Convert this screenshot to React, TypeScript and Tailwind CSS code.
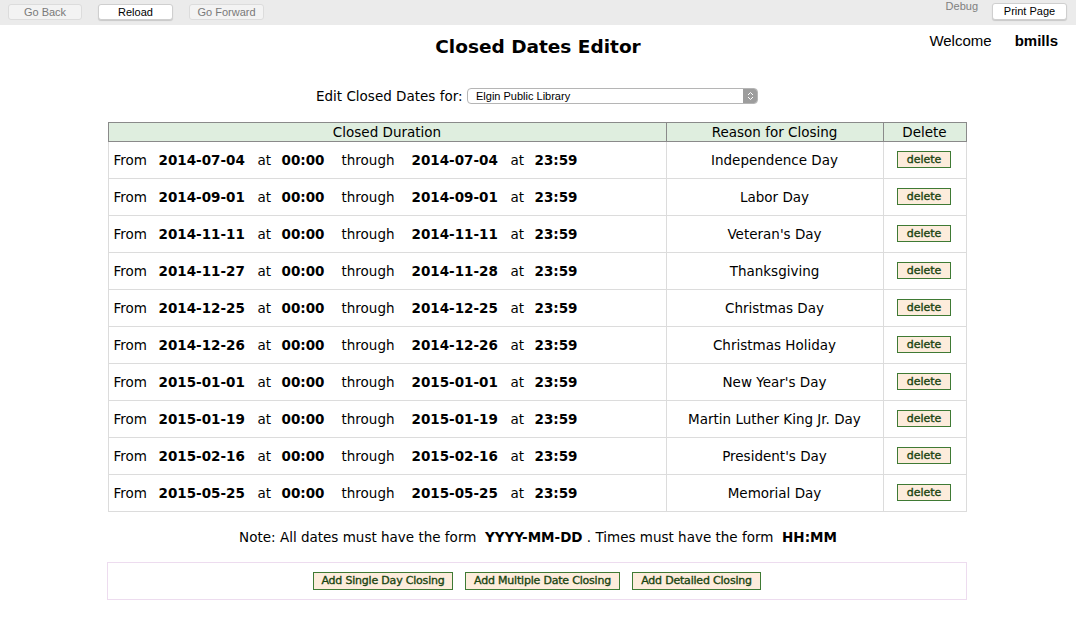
import React from "react";

const rows: [string, string, string][] = [
  ["2014-07-04", "2014-07-04", "Independence Day"],
  ["2014-09-01", "2014-09-01", "Labor Day"],
  ["2014-11-11", "2014-11-11", "Veteran's Day"],
  ["2014-11-27", "2014-11-28", "Thanksgiving"],
  ["2014-12-25", "2014-12-25", "Christmas Day"],
  ["2014-12-26", "2014-12-26", "Christmas Holiday"],
  ["2015-01-01", "2015-01-01", "New Year's Day"],
  ["2015-01-19", "2015-01-19", "Martin Luther King Jr. Day"],
  ["2015-02-16", "2015-02-16", "President's Day"],
  ["2015-05-25", "2015-05-25", "Memorial Day"],
];

const verdana = "font-['Verdana','DejaVu_Sans',sans-serif]";
const helv = "font-['Liberation_Sans','Helvetica',Arial,sans-serif]";

function GreenButton({ children, w }: { children: React.ReactNode; w: string }) {
  return (
    <button
      className={`${verdana} ${w} h-[18px] bg-[#fdecdc] border border-[#3f7a34] text-[#1a4410] text-[11px] [-webkit-text-stroke:0.35px_#1a4410] leading-[16px] text-center whitespace-nowrap tracking-[-0.2px]`}
    >
      {children}
    </button>
  );
}

export default function App() {
  return (
    <div className="w-[1076px] h-[629px] bg-white text-black overflow-hidden">
      {/* top toolbar */}
      <div className={`${helv} h-[25px] bg-[#ebebeb] flex items-start text-[11px]`}>
        <div className="flex gap-[16px] pl-[8px] pt-[4px]">
          <button className="w-[74px] h-[16px] rounded-[3px] bg-[#f3f3f3] border border-[#dcdcdc] text-[#7a7a7a] leading-[14px]">
            Go Back
          </button>
          <button className="w-[75px] h-[16px] rounded-[3px] bg-white border border-[#cfcfcf] shadow-[0_1px_1px_rgba(0,0,0,0.15)] text-black leading-[14px]">
            Reload
          </button>
          <button className="w-[75px] h-[16px] rounded-[3px] bg-[#f3f3f3] border border-[#dcdcdc] text-[#7a7a7a] leading-[14px]">
            Go Forward
          </button>
        </div>
        <div className="ml-auto flex items-start pr-[9px]">
          <span className="text-[#808080] mt-[0px] mr-[14px] leading-[13px]">Debug</span>
          <button className="mt-[3px] w-[75px] h-[17px] rounded-[3px] bg-white border border-[#cfcfcf] shadow-[0_1px_1px_rgba(0,0,0,0.15)] text-black leading-[15px]">
            Print Page
          </button>
        </div>
      </div>

      {/* header */}
      <div className="grid grid-cols-[1fr_auto_1fr] items-start">
        <div />
        <h1 className={`${verdana} text-[18.5px] font-bold leading-[22px] mt-[11px]`}>Closed Dates Editor</h1>
        <div className={`${helv} flex justify-end pr-[18px] mt-[7px] text-[15px] leading-[18px]`}>
          <span>Welcome</span>
          <span className="ml-[23px] font-bold">bmills</span>
        </div>
      </div>

      {/* select row */}
      <div className="flex justify-center items-center mt-[30px] ml-[-2px]">
        <span className={`${verdana} text-[13.5px] leading-[16px] w-[145px] whitespace-nowrap`}>Edit Closed Dates for:</span>
        <div className={`${helv} ml-[6px] w-[291px] h-[16px] rounded-[4px] border border-[#b5b5b5] bg-white flex items-center text-[11px] overflow-hidden`}>
          <span className="pl-[8px] flex-1 leading-[14px]">Elgin Public Library</span>
          <span className="w-[14px] h-full bg-[#9d9d9d] flex items-center justify-center">
            <svg width="7" height="10" viewBox="0 0 7 10">
              <path d="M1 4 L3.5 1.5 L6 4" fill="none" stroke="white" strokeWidth="1" />
              <path d="M1 6 L3.5 8.5 L6 6" fill="none" stroke="white" strokeWidth="1" />
            </svg>
          </span>
        </div>
      </div>

      {/* table */}
      <table className={`${verdana} mx-auto mt-[18px] w-[859px] border-collapse text-[13.5px] relative left-[-1px]`}>
        <thead>
          <tr className="bg-[#dfeedf] h-[19px] leading-[17px]">
            <th className="font-normal border border-[#8a8a8a] w-[558px] p-0">Closed Duration</th>
            <th className="font-normal border border-[#8a8a8a] w-[217px] p-0">Reason for Closing</th>
            <th className="font-normal border border-[#8a8a8a] p-0">Delete</th>
          </tr>
        </thead>
        <tbody>
          {rows.map(([d1, d2, reason], i) => (
            <tr key={i} className="h-[37px]">
              <td className="border border-[#dcdcdc] pl-[5px] p-0">
                <div className="flex items-center whitespace-nowrap">
                  <span className="w-[45px]">From</span>
                  <span className="w-[99px] font-bold">{d1}</span>
                  <span className="w-[24px]">at</span>
                  <span className="w-[60px] font-bold">00:00</span>
                  <span className="w-[70px]">through</span>
                  <span className="w-[99px] font-bold">{d2}</span>
                  <span className="w-[24px]">at</span>
                  <span className="font-bold">23:59</span>
                </div>
              </td>
              <td className="border border-[#dcdcdc] text-center p-0">{reason}</td>
              <td className="border border-[#dcdcdc] text-center p-0">
                <div className="flex justify-center pr-[1px] mt-[-1px]">
                  <button className="w-[54px] h-[17px] bg-[#fdecdc] border border-[#3f7a34] text-[#1a4410] text-[11px] [-webkit-text-stroke:0.35px_#1a4410] leading-[15px]">
                    delete
                  </button>
                </div>
              </td>
            </tr>
          ))}
        </tbody>
      </table>

      {/* note */}
      <div className={`${verdana} text-[13.5px] text-center mt-[17px] leading-[17px]`}>
        Note: All dates must have the form&nbsp; <b>YYYY-MM-DD</b> . Times must have the form&nbsp; <b>HH:MM</b>
      </div>

      {/* bottom box */}
      <div className="mx-auto mt-[16px] w-[860px] h-[38px] border border-[#eddcef] flex items-center justify-center gap-[12px] relative left-[-1px]">
        <GreenButton w="w-[140px]">Add Single Day Closing</GreenButton>
        <GreenButton w="w-[155px]">Add Multiple Date Closing</GreenButton>
        <GreenButton w="w-[129px]">Add Detailed Closing</GreenButton>
      </div>
    </div>
  );
}
